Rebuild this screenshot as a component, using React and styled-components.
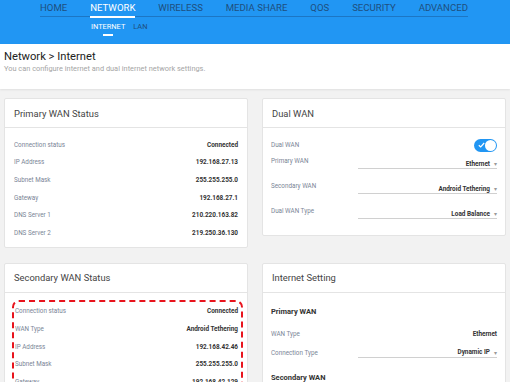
import React from 'react';
import styled, { createGlobalStyle } from 'styled-components';

const GlobalStyle = createGlobalStyle`
  html, body {
    margin: 0;
    padding: 0;
    background: #f2f2f2;
    font-family: Roboto, "Liberation Sans", Arial, sans-serif;
  }
  * { box-sizing: border-box; }
`;

const TopBar = styled.header`
  background: #2196f3;
  height: 44px;
  padding-left: 40px;
`;

const MainNav = styled.nav`
  display: flex;
  justify-content: space-between;
  width: 428px;
  height: 17px;
  border-bottom: 1px solid rgba(20, 60, 110, 0.35);
`;

const NavItem = styled.div`
  position: relative;
  font-size: 9.6px;
  line-height: 15px;
  color: ${({ active }) => (active ? '#ffffff' : '#1f4f7e')};
  white-space: nowrap;

  &::after {
    content: '';
    display: ${({ active }) => (active ? 'block' : 'none')};
    position: absolute;
    left: 0;
    right: 0;
    bottom: -2px;
    height: 2px;
    background: #ffffff;
  }
`;

const SubNav = styled.div`
  display: flex;
  gap: 8px;
  padding-left: 51px;
  padding-top: 5px;
`;

const SubItem = styled.div`
  position: relative;
  font-size: 7.4px;
  line-height: 10px;
  color: ${({ active }) => (active ? '#ffffff' : '#1f4f7e')};

  &::after {
    content: '';
    display: ${({ active }) => (active ? 'block' : 'none')};
    position: absolute;
    left: 12px;
    width: 10px;
    bottom: -4px;
    height: 2px;
    background: #ffffff;
  }
`;

const PageHead = styled.div`
  background: #ffffff;
  height: 45px;
  padding: 6px 4px 0;
  box-shadow: 0 1px 2px rgba(0, 0, 0, 0.08);
`;

const PageTitle = styled.h1`
  margin: 0;
  font-size: 11.2px;
  font-weight: 400;
  line-height: 14px;
  color: #222;
`;

const PageSub = styled.p`
  margin: 0;
  font-size: 7.4px;
  line-height: 10px;
  color: #a5a5a5;
`;

const Grid = styled.main`
  display: grid;
  grid-template-columns: 244px 244px;
  column-gap: 14px;
  row-gap: 15px;
  padding: 9px 4px 0;
  align-items: start;
`;

const Card = styled.section`
  background: #ffffff;
  border: 1px solid #e4e4e4;
  border-radius: 2px;
`;

const CardHead = styled.div`
  height: 29px;
  padding-left: 9px;
  display: flex;
  align-items: center;
  font-size: 9.4px;
  color: #444;
  border-bottom: 1px solid #e4e4e4;
`;

const CardBody = styled.div`
  padding: ${({ pad }) => pad || '8px 9px 5px'};
`;

const Row = styled.div`
  display: flex;
  justify-content: space-between;
  align-items: center;
  height: ${({ h }) => h || 17.6}px;
`;

const Label = styled.span`
  font-size: 6.3px;
  color: #7a8596;
`;

const Value = styled.span`
  font-size: 6.4px;
  font-weight: 700;
  color: #333;
`;

const SelectRow = styled.div`
  position: relative;
  height: 25px;
`;

const SelectLabel = styled.span`
  position: absolute;
  left: 0;
  top: 0;
  font-size: 6.3px;
  color: #7a8596;
`;

const Select = styled.div`
  position: ${({ inline }) => (inline ? 'static' : 'absolute')};
  right: 0;
  top: 3px;
  width: 139px;
  height: 9px;
  border-bottom: 1px solid #d0d0d0;
  display: flex;
  justify-content: flex-end;
  align-items: center;
  gap: 4px;
  font-size: 6.4px;
  font-weight: 700;
  color: #333;
  padding-bottom: 1px;
`;

const Caret = styled.span`
  font-size: 6px;
  font-weight: 400;
  color: #999;
`;

const Toggle = styled.div`
  width: 23px;
  height: 13px;
  border-radius: 7px;
  background: #2196f3;
  position: relative;
  display: flex;
  align-items: center;
  padding-left: 4px;

  &::after {
    content: '';
    position: absolute;
    right: 1px;
    top: 1px;
    width: 11px;
    height: 11px;
    border-radius: 50%;
    background: #fff;
  }
`;

const SectionTitle = styled.div`
  font-size: 7.5px;
  font-weight: 700;
  color: #333;
  height: ${({ h }) => h}px;
  padding-top: ${({ pt }) => pt || 0}px;
`;

const Highlight = styled.div`
  border: 2px dashed #e8141d;
  border-radius: 7px;
  border-bottom: none;
  border-bottom-left-radius: 0;
  border-bottom-right-radius: 0;
  padding: 1px 3px 0 1px;
  margin: 0 4px 0 7px;
`;

const Option = ({ label, value }) => (
  <SelectRow>
    <SelectLabel>{label}</SelectLabel>
    <Select>
      {value}
      <Caret>▾</Caret>
    </Select>
  </SelectRow>
);

const primary = [
  ['Connection status', 'Connected'],
  ['IP Address', '192.168.27.13'],
  ['Subnet Mask', '255.255.255.0'],
  ['Gateway', '192.168.27.1'],
  ['DNS Server 1', '210.220.163.82'],
  ['DNS Server 2', '219.250.36.130'],
];

const secondary = [
  ['Connection status', 'Connected'],
  ['WAN Type', 'Android Tethering'],
  ['IP Address', '192.168.42.46'],
  ['Subnet Mask', '255.255.255.0'],
  ['Gateway', '192.168.42.129'],
];

const navItems = ['HOME', 'NETWORK', 'WIRELESS', 'MEDIA SHARE', 'QOS', 'SECURITY', 'ADVANCED'];

export default function App() {
  return (
    <>
      <GlobalStyle />
      <TopBar>
        <MainNav>
          {navItems.map((n) => (
            <NavItem key={n} active={n === 'NETWORK'}>{n}</NavItem>
          ))}
        </MainNav>
        <SubNav>
          <SubItem active>INTERNET</SubItem>
          <SubItem>LAN</SubItem>
        </SubNav>
      </TopBar>
      <PageHead>
        <PageTitle>Network &gt; Internet</PageTitle>
        <PageSub>You can configure internet and dual internet network settings.</PageSub>
      </PageHead>
      <Grid>
        <Card>
          <CardHead>Primary WAN Status</CardHead>
          <CardBody>
            {primary.map(([l, v]) => (
              <Row key={l}>
                <Label>{l}</Label>
                <Value>{v}</Value>
              </Row>
            ))}
          </CardBody>
        </Card>
        <Card>
          <CardHead>Dual WAN</CardHead>
          <CardBody pad="5px 8px 3px">
            <Row h={24}>
              <Label>Dual WAN</Label>
              <Toggle>
                <svg width="7" height="6" viewBox="0 0 7 6">
                  <path d="M0.8 3.2 L2.7 5 L6.2 1" fill="none" stroke="#fff" strokeWidth="1.2" />
                </svg>
              </Toggle>
            </Row>
            <Option label="Primary WAN" value="Ethernet" />
            <Option label="Secondary WAN" value="Android Tethering" />
            <Option label="Dual WAN Type" value="Load Balance" />
          </CardBody>
        </Card>
        <Card>
          <CardHead>Secondary WAN Status</CardHead>
          <CardBody pad="7px 0 0">
            <Highlight>
              {secondary.map(([l, v]) => (
                <Row key={l}>
                  <Label>{l}</Label>
                  <Value>{v}</Value>
                </Row>
              ))}
            </Highlight>
          </CardBody>
        </Card>
        <Card>
          <CardHead>Internet Setting</CardHead>
          <CardBody pad="14px 8px 10px">
            <SectionTitle h={18}>Primary WAN</SectionTitle>
            <Row h={19}>
              <Label>WAN Type</Label>
              <Value>Ethernet</Value>
            </Row>
            <Row h={19}>
              <Label>Connection Type</Label>
              <Select inline>
                Dynamic IP
                <Caret>▾</Caret>
              </Select>
            </Row>
            <SectionTitle h={20} pt={10}>Secondary WAN</SectionTitle>
          </CardBody>
        </Card>
      </Grid>
    </>
  );
}
